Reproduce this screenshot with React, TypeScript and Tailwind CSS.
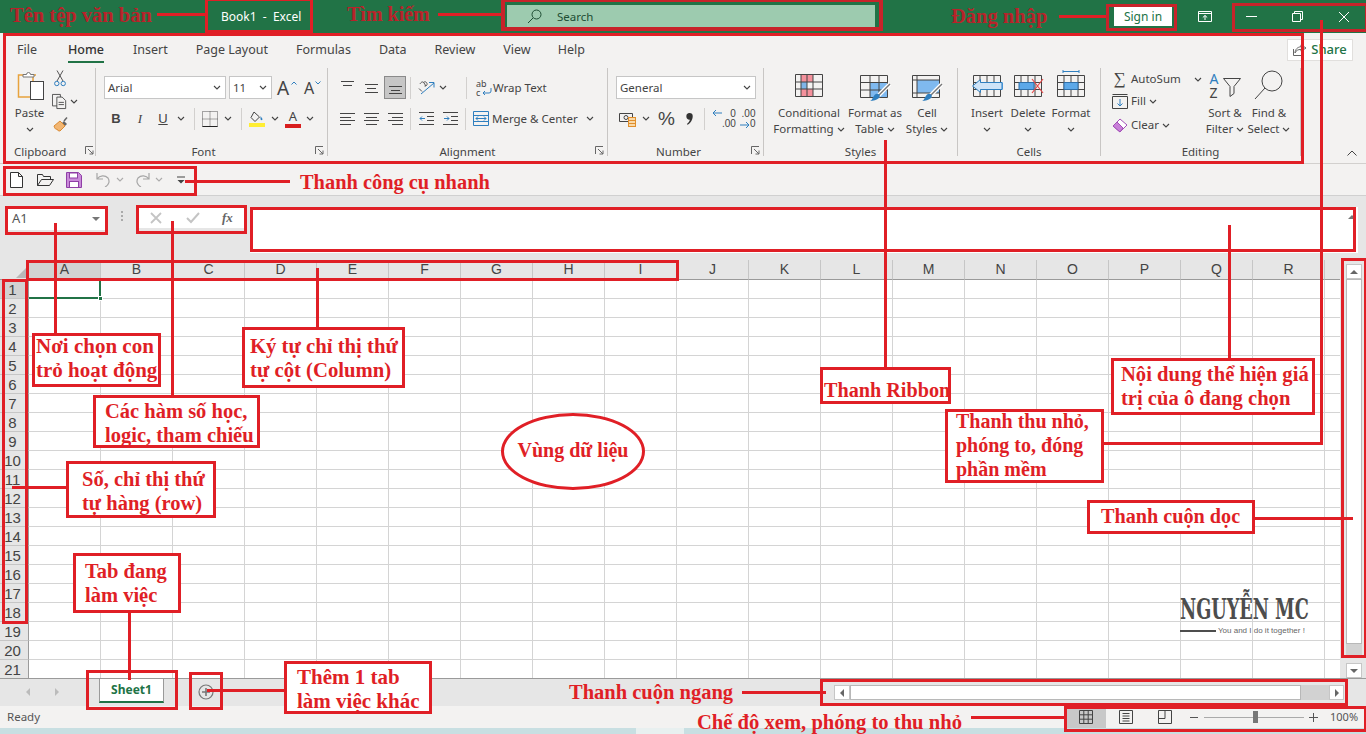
import type { ReactNode } from "react";
import clsx from "clsx";

const COLUMNS = ["A", "B", "C", "D", "E", "F", "G", "H", "I", "J", "K", "L", "M", "N", "O", "P", "Q", "R"];
const ROWS = Array.from({ length: 21 }, (_, i) => i + 1);

function Chev({ className }: { className?: string }) {
	return (
		<svg width="8" height="5" viewBox="0 0 8 5" className={clsx("shrink-0", className)} fill="none" stroke="#444" strokeWidth="1.1">
			<path d="M1 1l3 3 3-3" />
		</svg>
	);
}

function Launcher({ className }: { className?: string }) {
	return (
		<svg width="9" height="9" viewBox="0 0 9 9" className={clsx("absolute bottom-[4px]", className)} fill="none" stroke="#666" strokeWidth="1">
			<path d="M.5 8V.5H8M3 3l5 5M8 4.500V8H4.500" />
		</svg>
	);
}

function Sep({ className }: { className?: string }) {
	return <div className={clsx("w-px h-[22px] bg-[#d2d0ce] shrink-0", className)} />;
}

function Group({ label, width, labelClass, launcher, children }: { label: string; width: string; labelClass?: string; launcher?: string; children: ReactNode }) {
	return (
		<>
			<div className={clsx("relative flex flex-col h-[92px] shrink-0", width)}>
				<div className="flex-1 min-h-0">{children}</div>
				<div className={clsx("h-[16px] leading-[18px] text-center text-[11.5px] text-[#444]", labelClass)}>{label}</div>
				{launcher && <Launcher className={launcher} />}
			</div>
			<div className="w-px h-[88px] mt-px bg-[#c8c6c4] shrink-0" />
		</>
	);
}

function LargeBtn({ icon, lines, width, pb = "pb-[8px]" }: { icon: ReactNode; lines: string[]; width: string; pb?: string }) {
	return (
		<div className={clsx("flex flex-col items-center shrink-0", width)}>
			<div className={clsx("h-[38px] flex items-end justify-center", pb)}>{icon}</div>
			<div className="text-[11.5px] leading-[16px] text-[#444] text-center whitespace-nowrap">{lines[0]}</div>
			<div className="h-[16px] text-[11.5px] leading-[16px] text-[#444] flex items-center justify-center gap-[3px] whitespace-nowrap">
				{lines[1]}
				<Chev />
			</div>
		</div>
	);
}

function Combo({ text, width }: { text: string; width: string }) {
	return (
		<div className={clsx("h-[23px] bg-white border border-[#c6c6c6] flex items-center justify-between pl-[3px] pr-[4px] text-[11.5px] text-[#444]", width)}>
			{text}
			<Chev />
		</div>
	);
}

function AlignIcon({ rows, className }: { rows: [number, number, number][]; className?: string }) {
	return (
		<svg width="15" height="15" viewBox="0 0 15 15" className={className} fill="none" stroke="#444" strokeWidth="1">
			{rows.map(([y, a, b]) => (
				<path key={`${y}-${a}`} d={`M${a} ${y}.5H${b}`} />
			))}
		</svg>
	);
}

// table drawn first, so the blue parts of each icon sit on top of it
function GridIcon({ children, className }: { children?: ReactNode; className?: string }) {
	return (
		<svg width="32" height="27" viewBox="0 0 32 27" className={className} fill="none">
			<path d="M2.500 5.500h27v21h-27zM2.500 12.500h27M2.500 19.500h27M9 5.500v21M16 5.500v21M23 5.500v21" stroke="#444" strokeWidth="1" />
			{children}
		</svg>
	);
}

function BrushIcon({ fill }: { fill: ReactNode }) {
	return (
		<svg width="31" height="27" viewBox="0 0 31 27" fill="none">
			{fill}
			<path d="M30 9L18 21" stroke="#fff" strokeWidth="4" />
			<path d="M30 9L18 21" stroke="#777" strokeWidth="1.500" />
			<path d="M16 19c3-1 5 2 3 4-2 2-6 3-9 3 3-1 3-6 6-7z" fill="#2f7fbf" />
		</svg>
	);
}

function Callout({ className, inner, children }: { className: string; inner?: string; children: ReactNode }) {
	return (
		<div className={clsx("absolute bg-white border-[3px] border-[#e01f26] whitespace-nowrap leading-[24px]", className)}>
			<div className={inner}>{children}</div>
		</div>
	);
}

function Line({ className }: { className: string }) {
	return <div className={clsx("absolute bg-[#e01f26]", className)} />;
}

function Frame({ className }: { className: string }) {
	return <div className={clsx("absolute border-[3px] border-[#e01f26]", className)} />;
}

function TitleBar() {
	return (
		<div className="h-[33px] bg-[#217346] flex items-center shrink-0 text-white">
			<div className="ml-[221px] w-[286px] text-[12px]">Book1&nbsp; -&nbsp; Excel</div>
			<div className="w-[368px] h-[23px] bg-[#9dcbaf] flex items-center pl-[20px] text-[#1e4d33] text-[11.5px]">
				<svg width="15" height="15" viewBox="0 0 15 15" fill="none" stroke="#1e4d33" strokeWidth="1">
					<circle cx="9.500" cy="5.500" r="4.500" />
					<path d="M6 9l-5 5" />
				</svg>
				<span className="ml-[15px]">Search</span>
			</div>
			<div className="ml-[239px] w-[58px] h-[19px] bg-white text-[#217346] text-[12px] flex items-center justify-center">Sign in</div>
			<svg width="14" height="11" viewBox="0 0 14 11" className="ml-[26px]" fill="none" stroke="#fff" strokeWidth="1">
				<path d="M.5 .5h13v10H.5zM.5 2.500h13M7 9V4.500M4.800 6.500L7 4.500l2.200 2" />
			</svg>
			<div className="ml-[34px] w-[11px] h-px bg-white" />
			<svg width="11" height="11" viewBox="0 0 11 11" className="ml-[35px]" fill="none" stroke="#fff" strokeWidth="1">
				<path d="M.5 2.500h8v8h-8zM2.500 2.500V.5h8v8h-2" />
			</svg>
			<svg width="12" height="12" viewBox="0 0 12 12" className="ml-[35px]" fill="none" stroke="#fff" strokeWidth="1">
				<path d="M1 1l10 10M11 1L1 11" />
			</svg>
		</div>
	);
}

function RibbonTabs() {
	return (
		<div className="h-[34px] flex items-center justify-between pl-[17px] pr-[13px] text-[12.5px] text-[#444]">
			<div className="flex gap-[28px]">
				<span>File</span>
				<span className="relative ml-[3px] mr-[1px] text-[#333] font-medium">
					Home
					<span className="absolute left-0 right-0 top-[20px] h-[2px] bg-[#217346]" />
				</span>
				<span>Insert</span>
				<span>Page Layout</span>
				<span>Formulas</span>
				<span>Data</span>
				<span>Review</span>
				<span>View</span>
				<span className="-ml-[1px]">Help</span>
			</div>
			<div className="w-[66px] h-[22px] bg-white border border-[#e1dfdd] flex items-center justify-center gap-[4px] text-[13px] text-[#217346] font-medium mt-[-1px]">
				<svg width="14" height="12" viewBox="0 0 14 12" fill="none" stroke="#666" strokeWidth="1">
					<path d="M8 .8l5 3.200-5 3.200V5.400C5 5.400 3 6.500 2 9 2 5.500 4.500 3 8 2.700zM.5 5v6.500h10V8" />
				</svg>
				Share
			</div>
		</div>
	);
}

function ClipboardGroup() {
	return (
		<Group label="Clipboard" width="w-[90px]" labelClass="text-left pl-[9px]" launcher="left-[80px]">
			<div className="flex pl-[8px]">
				<LargeBtn
					width="w-[33px]"
					pb="pb-[3px]"
					lines={["Paste", ""]}
					icon={
						<svg width="28" height="31" viewBox="0 0 28 31" fill="none" className="ml-[3px]">
							<path d="M6 4H1.500v22H13" stroke="#e8a33d" strokeWidth="1.500" />
							<path d="M19 4h-3v6" stroke="#e8a33d" strokeWidth="1.500" />
							<path d="M6 6V3.500h3.500a2 2 0 0 1 4 0H17V6z" fill="#fff" stroke="#777" />
							<rect x="13.500" y="10.500" width="13" height="18" fill="#fff" stroke="#444" />
						</svg>
					}
				/>
				<div className="ml-[6px] w-[26px] flex flex-col">
					<svg width="12" height="17" viewBox="0 0 12 17" className="mt-[3px] ml-[2px]" fill="none" strokeWidth="1">
						<path d="M3 .5L9 11M9 .5L3 11" stroke="#555" />
						<circle cx="2.800" cy="13.500" r="2.200" stroke="#2f7fbf" />
						<circle cx="9.200" cy="13.500" r="2.200" stroke="#2f7fbf" />
					</svg>
					<div className="flex items-center mt-[6px]">
						<svg width="17" height="17" viewBox="0 0 17 17" fill="none" stroke="#444" strokeWidth="1">
							<path d="M.5 .5h9v13h-9z" />
							<path d="M5.500 3.500h6l4 4v9h-10z" fill="#f3f2f1" />
							<path d="M7.500 9.500h6M7.500 12h6" />
						</svg>
						<Chev className="ml-[3px]" />
					</div>
					<svg width="16" height="16" viewBox="0 0 16 16" className="mt-[6px] ml-[1px]">
						<path d="M8 8l3-3 3 3-3 3z" fill="#666" />
						<path d="M1 10l6-5 5 5-5 5c-1 0-3-.5-3-2-1 .5-2 .2-3-3z" fill="#f2b672" stroke="#d98a32" />
						<path d="M11 5l3-3.500" stroke="#666" strokeWidth="1.500" />
					</svg>
				</div>
			</div>
		</Group>
	);
}

function FontGroup() {
	return (
		<Group label="Font" width="w-[231px]" labelClass="pr-[16px]" launcher="left-[219px]">
			<div className="pl-[8px] pt-[9px]">
				<div className="flex items-center">
					<Combo text="Arial" width="w-[122px]" />
					<Combo text="11" width="w-[43px] ml-[3px]" />
					<span className="relative ml-[5px] w-[18px] text-[19px] leading-[20px] text-[#444]">
						A
						<svg width="6" height="4" viewBox="0 0 6 4" className="absolute right-[-2px] top-[3px]" fill="none" stroke="#2f7fbf">
							<path d="M.5 3.500L3 1l2.500 2.500" />
						</svg>
					</span>
					<span className="relative ml-[9px] w-[14px] text-[16px] leading-[20px] text-[#444]">
						A
						<svg width="6" height="4" viewBox="0 0 6 4" className="absolute right-[-3px] top-[3px]" fill="none" stroke="#2f7fbf">
							<path d="M.5 .5L3 3l2.500-2.500" />
						</svg>
					</span>
				</div>
				<div className="flex items-center h-[23px] mt-[8px] text-[#444]">
					<span className="ml-[7px] w-[10px] text-center text-[13px] font-bold font-['Liberation_Sans',sans-serif]">B</span>
					<span className="ml-[14px] w-[10px] text-center text-[13px] italic font-['Liberation_Serif',serif]">I</span>
					<span className="ml-[13px] w-[10px] text-center text-[13px] underline font-['Liberation_Sans',sans-serif]">U</span>
					<Chev className="ml-[9px]" />
					<Sep className="ml-[9px]" />
					<svg width="16" height="16" viewBox="0 0 16 16" className="ml-[7px]" fill="none" stroke="#555" strokeWidth="1" strokeDasharray="1 1">
						<path d="M.5 .5h15v15H.5zM.5 8h15M8 .5v15" />
						<path d="M.5 15.500h15" strokeDasharray="none" stroke="#222" />
					</svg>
					<Chev className="ml-[6px]" />
					<Sep className="ml-[9px]" />
					<svg width="17" height="17" viewBox="0 0 17 17" className="ml-[7px]">
						<path d="M5 2L10.500 7 6 11.500 2 7.500z" fill="none" stroke="#444" />
						<path d="M11.500 6l2 3c0 1.500-2 1.500-2 0z" fill="#2f7fbf" />
						<rect x="0" y="13" width="16" height="4" fill="#ffee33" />
					</svg>
					<Chev className="ml-[5px]" />
					<span className="ml-[6px] w-[16px] flex flex-col items-center text-[13px] leading-[13px]">
						A
						<span className="w-[16px] h-[4px] bg-[#d81e1e] mt-[1px]" />
					</span>
					<Chev className="ml-[5px]" />
				</div>
			</div>
		</Group>
	);
}

function AlignmentGroup() {
	return (
		<Group label="Alignment" width="w-[279px]" launcher="left-[267px]">
			<div className="pl-[12px] pt-[9px] text-[11.5px] text-[#444]">
				<div className="flex items-center h-[23px]">
					<AlignIcon rows={[[1, 1, 14], [5, 3, 12]]} />
					<AlignIcon className="ml-[9px]" rows={[[4, 1, 14], [8, 3, 12], [12, 1, 14]]} />
					<div className="ml-[5px] w-[22px] h-[23px] bg-[#c6c6c6] border border-[#8a8a8a] flex items-center justify-center">
						<AlignIcon rows={[[6, 1, 14], [10, 3, 12], [13, 1, 14]]} />
					</div>
					<Sep className="ml-[4px]" />
					<svg width="17" height="17" viewBox="0 0 17 17" className="ml-[7px]" fill="none">
						<path d="M3 15L16 4M11 3.500h5v5" stroke="#2f7fbf" />
						<path d="M2 5c1-2 3-3 4-1l2 3M5.500 3.500C7 2 8.500 3 9 4.500c.5 1.500-1 3-2.500 2.500M1 9.500l3 3" stroke="#555" />
					</svg>
					<Chev className="ml-[4px]" />
					<Sep className="ml-[19px]" />
					<div className="relative ml-[9px] w-[15px] h-[18px] flex flex-col text-[9px] leading-[9px]">
						<span>ab</span>
						<span>c</span>
						<svg width="10" height="9" viewBox="0 0 10 9" className="absolute right-[-1px] bottom-0" fill="none" stroke="#2f7fbf">
							<path d="M9 0v3a2 2 0 0 1-2 2H1M3 3L1 5l2 2" />
						</svg>
					</div>
					<span className="ml-[2px] whitespace-nowrap">Wrap Text</span>
				</div>
				<div className="flex items-center h-[23px] mt-[8px]">
					<AlignIcon rows={[[2, 0, 15], [6, 0, 11], [9, 0, 15], [13, 0, 11]]} />
					<AlignIcon className="ml-[9px]" rows={[[2, 0, 15], [6, 2, 13], [9, 0, 15], [13, 2, 13]]} />
					<AlignIcon className="ml-[9px]" rows={[[2, 0, 15], [6, 4, 15], [9, 0, 15], [13, 4, 15]]} />
					<Sep className="ml-[7px]" />
					<svg width="15" height="15" viewBox="0 0 15 15" className="ml-[8px]" fill="none">
						<path d="M0 1.500h15M0 13.500h15M8 5.500h7M8 9.500h7" stroke="#444" />
						<path d="M6 7.500H1M3 5.500l-2 2 2 2" stroke="#2f7fbf" />
					</svg>
					<svg width="15" height="15" viewBox="0 0 15 15" className="ml-[9px]" fill="none">
						<path d="M0 1.500h15M0 13.500h15M8 5.500h7M8 9.500h7" stroke="#444" />
						<path d="M1 7.500h5M4 5.500l2 2-2 2" stroke="#2f7fbf" />
					</svg>
					<Sep className="ml-[7px]" />
					<svg width="16" height="15" viewBox="0 0 16 15" className="ml-[7px]" fill="none">
						<path d="M.5 .5h15v14H.5zM.5 4.500h15M.5 10.500h15" stroke="#2f7fbf" />
						<path d="M3 7.500h10M5 5.500l-2 2 2 2M11 5.500l2 2-2 2" stroke="#2f7fbf" />
					</svg>
					<span className="ml-[3px] whitespace-nowrap">Merge &amp; Center</span>
					<Chev className="ml-[8px]" />
				</div>
			</div>
		</Group>
	);
}

function NumberGroup() {
	return (
		<Group label="Number" width="w-[155px]" labelClass="pr-[14px]" launcher="left-[143px]">
			<div className="pl-[8px] pt-[9px] text-[#444]">
				<Combo text="General" width="w-[140px]" />
				<div className="flex items-center h-[23px] mt-[8px]">
					<svg width="17" height="16" viewBox="0 0 17 16" className="ml-[3px]" fill="none">
						<path d="M.5 2.500h13v8H.5z" stroke="#444" />
						<circle cx="7" cy="6.500" r="2" stroke="#444" />
						<rect x="9.500" y="6.500" width="7" height="9" fill="#f9d9a8" stroke="#e08e2b" />
						<path d="M9.500 9.500h7M9.500 12.500h7" stroke="#e08e2b" />
					</svg>
					<Chev className="ml-[6px]" />
					<span className="ml-[8px] w-[16px] text-[19px] leading-[20px] font-['Liberation_Sans',sans-serif]">%</span>
					<svg width="7" height="12" viewBox="0 0 7 12" className="ml-[12px]" fill="#333">
						<path d="M3.500 0a3.200 3.200 0 0 1 3.200 3.400c0 3.500-2.500 6.800-5.200 8.400l-.6-.7c1.600-1.300 2.700-3 3-4.400A3.200 3.200 0 1 1 3.500 0z" />
					</svg>
					<Sep className="ml-[11px]" />
					<div className="ml-[7px] flex items-center text-[10px] leading-[10px] font-['Liberation_Sans',sans-serif]">
						<svg width="10" height="8" viewBox="0 0 10 8" fill="none" stroke="#2f7fbf" className="self-start">
							<path d="M10 4H1M4 1L1 4l3 3" />
						</svg>
						<span className="flex flex-col items-end">
							<span>0</span>
							<span>.00</span>
						</span>
					</div>
					<div className="ml-[4px] flex items-center text-[10px] leading-[10px] font-['Liberation_Sans',sans-serif]">
						<span className="flex flex-col items-end relative">
							<span>.00</span>
							<span className="pl-[10px]">0</span>
							<svg width="10" height="8" viewBox="0 0 10 8" fill="none" stroke="#2f7fbf" className="absolute left-0 bottom-0">
								<path d="M0 4h9M6 1l3 3-3 3" />
							</svg>
						</span>
					</div>
				</div>
			</div>
		</Group>
	);
}

function StylesGroup() {
	return (
		<Group label="Styles" width="w-[193px]">
			<div className="flex pl-[8px]">
				<LargeBtn
					width="w-[74px]"
					lines={["Conditional", "Formatting"]}
					icon={
						<svg width="28" height="23" viewBox="0 0 28 23" fill="none">
							<path d="M6 1h12v7H6zM6 8h6v7H6zM6 15h12v7H6z" fill="#f4919c" />
							<path d="M6 8h6v7H6z" fill="#7fb5e8" />
							<path d="M.5 .5h27v22H.5zM.5 8h27M.5 15h27M6 .5v22M12 .5v22M18 .5v22" stroke="#444" />
						</svg>
					}
				/>
				<LargeBtn
					width="w-[52px] ml-[3px]"
					pb="pb-[3px]"
					lines={["Format as", "Table"]}
					icon={
						<BrushIcon
							fill={
								<>
									<path d="M10 7h18v15H10z" fill="#7fb9ef" />
									<path d="M.5 .5h27v22H.5zM.5 7.500h27M.5 15h27M10 .5v22M19 .5v22" stroke="#444" />
								</>
							}
						/>
					}
				/>
				<LargeBtn
					width="w-[42px] ml-[5px]"
					pb="pb-[3px]"
					lines={["Cell", "Styles"]}
					icon={
						<BrushIcon
							fill={
								<>
									<path d="M5 5h22v13H5z" fill="#7fb9ef" />
									<path d="M.5 .5h27v22H.5zM.5 5h27M.5 18h27M5 .5v22" stroke="#444" />
								</>
							}
						/>
					}
				/>
			</div>
		</Group>
	);
}

function CellsGroup() {
	return (
		<Group label="Cells" width="w-[142px]">
			<div className="flex pl-[9px]">
				<LargeBtn
					width="w-[40px]"
					lines={["Insert", ""]}
					icon={
						<GridIcon>
							<path d="M16 12.500h16v7H16z" fill="#5ca8e8" />
							<path d="M31 12.500H9.500v-3l-8 6.500 8 6.500v-3H31z" fill="#cfe4f7" stroke="#2f7fbf" />
						</GridIcon>
					}
				/>
				<LargeBtn
					width="w-[40px] ml-[1px]"
					lines={["Delete", ""]}
					icon={
						<GridIcon>
							<path d="M7 12.500h15v7H7z" fill="#5ca8e8" stroke="#2f6fa8" />
							<path d="M20 9l11 14M31 9L20 23" stroke="#e84a4a" strokeWidth="1.200" />
						</GridIcon>
					}
				/>
				<LargeBtn
					width="w-[44px] ml-[1px]"
					lines={["Format", ""]}
					icon={
						<GridIcon>
							<path d="M9 12.500h14v7H9z" fill="#5ca8e8" stroke="#2f6fa8" />
							<path d="M8 1.500h16M8 0v3M24 0v3" stroke="#2f7fbf" />
						</GridIcon>
					}
				/>
			</div>
		</Group>
	);
}

function EditingGroup() {
	return (
		<Group label="Editing" width="w-[199px]">
			<div className="flex pl-[11px]">
				<div className="w-[91px] pt-px text-[11.5px] text-[#444]">
					<div className="h-[22px] flex items-center">
						<span className="w-[15px] text-[17px] leading-[20px] text-center font-['Liberation_Serif',serif]">∑</span>
						<span className="ml-[4px]">AutoSum</span>
						<Chev className="ml-[13px]" />
					</div>
					<div className="h-[22px] flex items-center">
						<svg width="16" height="15" viewBox="0 0 16 15" fill="none">
							<path d="M.5 2.500h15v12H.5z" stroke="#444" />
							<path d="M.5 .5h15" stroke="#444" />
							<path d="M8 5v7M5.500 9.500L8 12l2.500-2.500" stroke="#2f7fbf" />
						</svg>
						<span className="ml-[3px]">Fill</span>
						<Chev className="ml-[3px]" />
					</div>
					<div className="h-[22px] mt-[2px] flex items-center">
						<svg width="16" height="15" viewBox="0 0 16 15" fill="none">
							<path d="M1 8l7-7 7 6-7 7z" fill="#fff" stroke="#a34fb8" />
							<path d="M1 8l4-4 6 6-3 4z" fill="#c880d8" stroke="#a34fb8" />
						</svg>
						<span className="ml-[3px]">Clear</span>
						<Chev className="ml-[3px]" />
					</div>
				</div>
				<LargeBtn
					width="w-[44px]"
					pb="pb-[5px]"
					lines={["Sort &", "Filter"]}
					icon={
						<div className="flex items-end h-[28px] text-[14px] leading-[14px]">
							<div className="flex flex-col w-[13px]">
								<span className="text-[#2f7fbf]">A</span>
								<span className="text-[#444]">Z</span>
							</div>
							<svg width="18" height="19" viewBox="0 0 18 19" fill="none" className="mb-[3px]">
								<path d="M.5 .5h17l-6.500 8v7l-4 3v-10z" stroke="#444" />
							</svg>
						</div>
					}
				/>
				<LargeBtn
					width="w-[44px]"
					pb="pb-[5px]"
					lines={["Find &", "Select"]}
					icon={
						<svg width="30" height="30" viewBox="0 0 30 30" fill="none" stroke="#444">
							<circle cx="18" cy="11" r="10" />
							<path d="M11 18L1 29" />
						</svg>
					}
				/>
			</div>
		</Group>
	);
}

function Ribbon() {
	return (
		<div className="relative h-[131px] bg-[#f3f2f1] shrink-0">
			<RibbonTabs />
			<div className="flex pl-[5px]">
				<ClipboardGroup />
				<FontGroup />
				<AlignmentGroup />
				<NumberGroup />
				<StylesGroup />
				<CellsGroup />
				<EditingGroup />
			</div>
			<svg width="10" height="6" viewBox="0 0 10 6" className="absolute left-[1347px] top-[117px]" fill="none" stroke="#444">
				<path d="M.5 5.500L5 1l4.500 4.500" />
			</svg>
			<div className="absolute left-0 right-0 bottom-0 h-px bg-[#d2d0ce]" />
		</div>
	);
}

function QuickAccess() {
	return (
		<div className="h-[32px] bg-[#f3f2f1] flex items-center pl-[10px] shrink-0 border-b border-[#d0d0d0]">
			<svg width="13" height="16" viewBox="0 0 13 16" fill="#fff" stroke="#333">
				<path d="M.5 .5h8l4 4v11H.5zM8.500 .5v4h4" />
			</svg>
			<svg width="17" height="13" viewBox="0 0 17 13" className="ml-[14px]" fill="none" stroke="#333">
				<path d="M.5 12.500V1.500h5l1 2h7v3M.5 12.500h12l4-6h-12z" />
			</svg>
			<svg width="16" height="16" viewBox="0 0 16 16" className="ml-[12px]">
				<path d="M.5 .5h12l3 3v12H.5z" fill="#c98ad9" stroke="#8f3fa6" />
				<rect x="3.500" y="1" width="8" height="5" fill="#fff" stroke="#8f3fa6" />
				<rect x="3.500" y="9.500" width="9" height="6" fill="#fff" stroke="#8f3fa6" />
			</svg>
			<svg width="15" height="15" viewBox="0 0 15 15" className="ml-[14px]" fill="none" stroke="#a6a6a6" strokeWidth="1.200">
				<path d="M1 1v6h6M1 7c3-4 8-4 11-1 2 3 1 7-3 9" />
			</svg>
			<Chev className="ml-[5px] opacity-40" />
			<svg width="15" height="15" viewBox="0 0 15 15" className="ml-[11px]" fill="none" stroke="#a6a6a6" strokeWidth="1.200">
				<path d="M14 1v6H8M14 7C11 3 6 3 3 6c-2 3-1 7 3 9" />
			</svg>
			<Chev className="ml-[5px] opacity-40" />
			<svg width="8" height="8" viewBox="0 0 8 8" className="ml-[14px]" fill="#444">
				<path d="M0 .5h8v1H0zM.5 4h7L4 7.500z" />
			</svg>
		</div>
	);
}

function FormulaBar() {
	return (
		<div className="h-[64px] bg-[#e6e6e6] flex items-start shrink-0">
			<div className="ml-[5px] mt-[12px] w-[103px] h-[22px] bg-white flex items-center justify-between pl-[7px] pr-[8px] text-[13px] text-[#555]">
				A1
				<span className="w-0 h-0 border-x-[4px] border-x-transparent border-t-[4px] border-t-[#777]" />
			</div>
			<div className="ml-[13px] mt-[15px] flex flex-col gap-[2px]">
				<span className="w-[2px] h-[2px] bg-[#aaa]" />
				<span className="w-[2px] h-[2px] bg-[#aaa]" />
				<span className="w-[2px] h-[2px] bg-[#aaa]" />
			</div>
			<div className="ml-[13px] mt-[11px] w-[111px] h-[21px] bg-white flex items-center pl-[14px] text-[#bbb]">
				<svg width="12" height="12" viewBox="0 0 12 12" fill="none" stroke="#c4c4c4" strokeWidth="1.800">
					<path d="M1 1l10 10M11 1L1 11" />
				</svg>
				<svg width="14" height="12" viewBox="0 0 14 12" className="ml-[24px]" fill="none" stroke="#c4c4c4" strokeWidth="2">
					<path d="M1 6l4 4 8-9" />
				</svg>
				<span className="ml-[22px] text-[13px] italic font-bold text-[#666] font-['Liberation_Serif',serif]">fx</span>
			</div>
			<div className="relative ml-[3px] mt-[11px] w-[1108px] h-[46px] bg-white">
				<svg width="8" height="5" viewBox="0 0 8 5" className="absolute right-[2px] top-[7px]" fill="#777">
					<path d="M0 5l4-4 4 4z" />
				</svg>
			</div>
		</div>
	);
}

function SheetGrid() {
	const head = "flex items-center justify-center text-[#444] font-['Liberation_Sans',sans-serif]";
	return (
		<div className="relative w-[1340px] h-[418px] overflow-hidden grid grid-cols-[29px_repeat(18,72px)_15px] grid-rows-[20px_repeat(21,19px)] bg-white">
			<div className="relative bg-[#e6e6e6] border-b border-[#9a9a9a]">
				<span className="absolute right-[1px] bottom-[1px] w-0 h-0 border-l-[12px] border-l-transparent border-b-[12px] border-b-[#b8b8b8]" />
			</div>
			{COLUMNS.map((c) => (
				<div key={c} className={clsx(head, "text-[14px] border-b border-[#9a9a9a] border-r border-r-[#c6c6c6]", c === "A" ? "bg-[#d2d2d2]" : "bg-[#e6e6e6]")}>
					{c}
				</div>
			))}
			<div className="bg-[#e6e6e6] border-b border-[#9a9a9a]" />
			{ROWS.map((r) => (
				<div key={r} className="contents">
					<div className={clsx(head, "text-[15px] pt-[2px] pr-[3px] border-r border-[#9a9a9a] border-b border-b-[#c6c6c6]", r === 1 ? "bg-[#d2d2d2]" : "bg-[#e6e6e6]")}>{r}</div>
					{COLUMNS.map((c) => (
						<div key={c} className="relative border-r border-b border-[#d4d4d4]">
							{r === 1 && c === "A" && (
								<>
									<span className="absolute left-0 right-[-1px] bottom-[-1px] h-[2px] bg-[#217346]" />
									<span className="absolute top-0 bottom-[-1px] right-[-1px] w-[2px] bg-[#217346]" />
									<span className="absolute right-[-3px] bottom-[-3px] w-[5px] h-[5px] bg-[#217346] border border-white z-10" />
								</>
							)}
						</div>
					))}
					<div className="border-b border-[#d4d4d4]" />
				</div>
			))}
			<div className="absolute left-[1180px] top-[337px] w-[132px] text-[#4d4d4d]">
				<div className="h-[25px] text-[27px] leading-[25px] font-bold font-['DejaVu_Serif',serif] whitespace-nowrap origin-left scale-x-[0.655]">NGUYỄN MC</div>
				<div className="flex items-center mt-[5px]">
					<span className="w-[36px] h-[2px] bg-[#4d4d4d]" />
					<span className="ml-[2px] text-[8px] leading-[8px] text-[#666] whitespace-nowrap font-['Liberation_Sans',sans-serif]">You and I do it together !</span>
				</div>
			</div>
		</div>
	);
}

function VerticalScroll() {
	return (
		<div className="w-[26px] h-[418px] bg-[#e6e6e6] flex flex-col items-center pt-[4px] pl-[1px]">
			<div className="w-[16px] h-[15px] bg-white border border-[#c6c6c6] flex items-center justify-center">
				<span className="w-0 h-0 border-x-[4px] border-x-transparent border-b-[4px] border-b-[#666]" />
			</div>
			<div className="w-[16px] h-[365px] bg-white border border-[#b8b8b8]" />
			<div className="w-[16px] flex-1 bg-[#d2d2d2]" />
			<div className="w-[16px] h-[15px] mt-[7px] bg-white border border-[#c6c6c6] flex items-center justify-center">
				<span className="w-0 h-0 border-x-[4px] border-x-transparent border-t-[4px] border-t-[#666]" />
			</div>
		</div>
	);
}

function SheetTabs() {
	return (
		<div className="h-[28px] bg-[#e6e6e6] border-t border-[#9a9a9a] flex items-start shrink-0">
			<span className="ml-[26px] mt-[9px] w-0 h-0 border-y-[4px] border-y-transparent border-r-[4px] border-r-[#bbb]" />
			<span className="ml-[25px] mt-[9px] w-0 h-0 border-y-[4px] border-y-transparent border-l-[4px] border-l-[#bbb]" />
			<div className="ml-[40px] w-[65px] h-[24px] bg-white border-x border-[#9a9a9a] border-b-[2px] border-b-[#217346] flex items-center justify-center text-[12px] font-bold text-[#217346]">
				Sheet1
			</div>
			<svg width="16" height="16" viewBox="0 0 16 16" className="ml-[34px] mt-[5px]" fill="none" stroke="#777" strokeWidth="1.200">
				<circle cx="8" cy="8" r="7" />
				<path d="M8 4v8M4 8h8" strokeWidth="1.600" />
			</svg>
			<div className="ml-[620px] mt-[6px] w-[16px] h-[15px] bg-white border border-[#c6c6c6] flex items-center justify-center">
				<span className="w-0 h-0 border-y-[4px] border-y-transparent border-r-[4px] border-r-[#666]" />
			</div>
			<div className="mt-[6px] w-[451px] h-[15px] bg-white border border-[#b8b8b8]" />
			<div className="mt-[6px] w-[28px] h-[15px] bg-[#d2d2d2]" />
			<div className="mt-[6px] w-[15px] h-[15px] bg-white border border-[#c6c6c6] flex items-center justify-center">
				<span className="w-0 h-0 border-y-[4px] border-y-transparent border-l-[4px] border-l-[#666]" />
			</div>
		</div>
	);
}

function StatusBar() {
	return (
		<div className="h-[22px] bg-[#f3f2f1] flex items-center shrink-0 text-[11.5px] text-[#555]">
			<span className="ml-[7px] w-[1059px]">Ready</span>
			<div className="w-[40px] h-[22px] bg-[#c8c8c8] flex items-center justify-center">
				<svg width="14" height="14" viewBox="0 0 14 14" fill="none" stroke="#444">
					<path d="M.5 .5h13v13H.5zM.5 4.800h13M.5 9.200h13M4.800 .5v13M9.200 .5v13" />
				</svg>
			</div>
			<svg width="14" height="14" viewBox="0 0 14 14" className="ml-[13px]" fill="none" stroke="#444">
				<path d="M.5 .5h13v13H.5zM3.500 3.500h7M3.500 6h7M3.500 8.500h7M3.500 11h7" />
			</svg>
			<svg width="14" height="14" viewBox="0 0 14 14" className="ml-[25px]" fill="none" stroke="#444">
				<path d="M.5 .5h13v13H.5zM.5 8.500h6.500V.5" />
			</svg>
			<span className="ml-[18px] w-[8px] h-px bg-[#555]" />
			<div className="relative ml-[6px] w-[100px] h-px bg-[#aaa]">
				<span className="absolute left-[49px] top-[-6px] w-[5px] h-[12px] bg-[#777]" />
			</div>
			<svg width="9" height="9" viewBox="0 0 9 9" className="ml-[5px]" fill="none" stroke="#555">
				<path d="M4.500 0v9M0 4.500h9" />
			</svg>
			<span className="ml-[12px] text-[11px]">100%</span>
		</div>
	);
}

function Annotations() {
	return (
		<div className="absolute inset-0 pointer-events-none font-['Liberation_Serif',serif] font-bold text-[#e01f26]">
			{/* title bar */}
			<span className="absolute left-[10px] top-[2px] text-[20.5px] leading-[26px] text-[#b8232a] whitespace-nowrap">Tên tệp văn bản</span>
			<Line className="left-[157px] top-[13px] w-[48px] h-[3px]" />
			<Frame className="left-[205px] top-[-2px] w-[108px] h-[35px]" />
			<span className="absolute left-[347px] top-[1px] text-[20px] leading-[26px] text-[#b8232a] whitespace-nowrap">Tìm kiếm</span>
			<Line className="left-[438px] top-[13px] w-[64px] h-[3px]" />
			<div className="absolute left-[501px] top-[-2px] w-[382px] h-[33px] border-[4px] border-[#c8232a]" />
			<span className="absolute left-[951px] top-[3px] text-[20.5px] leading-[26px] text-[#b8232a] whitespace-nowrap">Đăng nhập</span>
			<Line className="left-[1059px] top-[15px] w-[48px] h-[3px]" />
			<div className="absolute left-[1106px] top-[4px] w-[71px] h-[27px] border-[3px] border-[#c8232a]" />
			<div className="absolute left-[1232px] top-[3px] w-[136px] h-[29px] border-[3px] border-[#c8232a]" />

			{/* ribbon and quick access */}
			<Frame className="left-[3px] top-[33px] w-[1301px] h-[131px]" />
			<Frame className="left-[3px] top-[166px] w-[194px] h-[30px]" />
			<Line className="left-[185px] top-[180px] w-[105px] h-[3px]" />
			<span className="absolute left-[300px] top-[169px] text-[20.4px] leading-[26px] whitespace-nowrap">Thanh công cụ nhanh</span>

			{/* formula bar */}
			<Frame className="left-[5px] top-[206px] w-[103px] h-[29px]" />
			<Frame className="left-[136px] top-[205px] w-[111px] h-[29px]" />
			<Frame className="left-[250px] top-[207px] w-[1106px] h-[45px]" />

			{/* headers */}
			<Frame className="left-[26px] top-[260px] w-[653px] h-[21px]" />
			<Frame className="left-[2px] top-[279px] w-[26px] h-[345px]" />
			<Frame className="left-[1341px] top-[258px] w-[26px] h-[400px]" />

			{/* leader lines */}
			<Line className="left-[54px] top-[223px] w-[3px] h-[110px]" />
			<Line className="left-[171px] top-[221px] w-[3px] h-[174px]" />
			<Line className="left-[316px] top-[268px] w-[3px] h-[60px]" />
			<Line className="left-[884px] top-[140px] w-[3px] h-[227px]" />
			<Line className="left-[1228px] top-[225px] w-[3px] h-[133px]" />
			<Line className="left-[1320px] top-[20px] w-[3px] h-[425px]" />
			<Line className="left-[1103px] top-[442px] w-[220px] h-[3px]" />
			<Line className="left-[12px] top-[486px] w-[54px] h-[3px]" />
			<Line className="left-[1255px] top-[517px] w-[98px] h-[3px]" />
			<Line className="left-[128px] top-[612px] w-[3px] h-[68px]" />

			{/* callouts */}
			<Callout className="left-[32px] top-[333px] w-[129px] h-[54px] pl-[1px] text-[21px]" inner="-mt-[2px]">
				Nơi chọn con
				<br />
				trỏ hoạt động
			</Callout>
			<Callout className="left-[242px] top-[327px] w-[163px] h-[61px] pl-[5px] pt-[4px] text-[20.7px]">
				Ký tự chỉ thị thứ
				<br />
				tự cột (Column)
			</Callout>
			<Callout className="left-[93px] top-[395px] w-[167px] h-[53px] pl-[9px] pt-[1px] text-[20.5px]">
				Các hàm số học,
				<br />
				logic, tham chiếu
			</Callout>
			<Callout className="left-[66px] top-[461px] w-[150px] h-[57px] pl-[13px] pt-[3px] text-[20.5px]">
				Số, chỉ thị thứ
				<br />
				tự hàng (row)
			</Callout>
			<Callout className="left-[73px] top-[553px] w-[108px] h-[60px] pl-[9px] pt-[3px] text-[20.5px]">
				Tab đang
				<br />
				làm việc
			</Callout>
			<Callout className="left-[820px] top-[367px] w-[131px] h-[37px] pl-[1px] pt-[8px] text-[20.2px]">Thanh Ribbon</Callout>
			<Callout className="left-[1111px] top-[358px] w-[204px] h-[57px] pl-[7px] pt-[1px] text-[20.6px]">
				Nội dung thể hiện giá
				<br />
				trị của ô đang chọn
			</Callout>
			<Callout className="left-[945px] top-[409px] w-[159px] h-[74px] pl-[8px] text-[20px] overflow-hidden" inner="-mt-[3px]">
				Thanh thu nhỏ,
				<br />
				phóng to, đóng
				<br />
				phần mềm
			</Callout>
			<Callout className="left-[1087px] top-[500px] w-[168px] h-[34px] pl-[11px] pt-[1px] text-[20.2px]">Thanh cuộn dọc</Callout>
			<div className="absolute left-[501px] top-[413px] w-[144px] h-[77px] rounded-[50%] bg-white border-[3px] border-[#e01f26] flex items-center justify-center pb-[4px] text-[20px] whitespace-nowrap">
				Vùng dữ liệu
			</div>

			{/* sheet tabs and scrollbars */}
			<Frame className="left-[86px] top-[670px] w-[92px] h-[40px]" />
			<Frame className="left-[189px] top-[672px] w-[34px] h-[38px]" />
			<Line className="left-[207px] top-[689px] w-[77px] h-[3px]" />
			<Callout className="left-[284px] top-[661px] w-[148px] h-[53px] pl-[10px] pt-px text-[21px]">
				Thêm 1 tab
				<br />
				làm việc khác
			</Callout>
			<span className="absolute left-[569px] top-[679px] text-[20.5px] leading-[26px] whitespace-nowrap">Thanh cuộn ngang</span>
			<Line className="left-[742px] top-[691px] w-[84px] h-[3px]" />
			<Frame className="left-[820px] top-[679px] w-[528px] h-[27px]" />
			<span className="absolute left-[697px] top-[709px] text-[20.6px] leading-[26px] whitespace-nowrap">Chế độ xem, phóng to thu nhỏ</span>
			<Line className="left-[971px] top-[716px] w-[93px] h-[3px]" />
			<Frame className="left-[1064px] top-[706px] w-[303px] h-[26px]" />
		</div>
	);
}

export default function App() {
	return (
		<div className="relative w-[1366px] h-[734px] overflow-hidden flex flex-col bg-[#c8dfe2] font-['Noto_Sans',sans-serif]">
			<TitleBar />
			<Ribbon />
			<QuickAccess />
			<FormulaBar />
			<div className="flex shrink-0">
				<SheetGrid />
				<VerticalScroll />
			</div>
			<SheetTabs />
			<StatusBar />
			<div className="flex-1 flex">
				<div className="w-[636px]" />
				<div className="w-[48px] bg-[#e8f0f0]" />
			</div>
			<Annotations />
		</div>
	);
}
